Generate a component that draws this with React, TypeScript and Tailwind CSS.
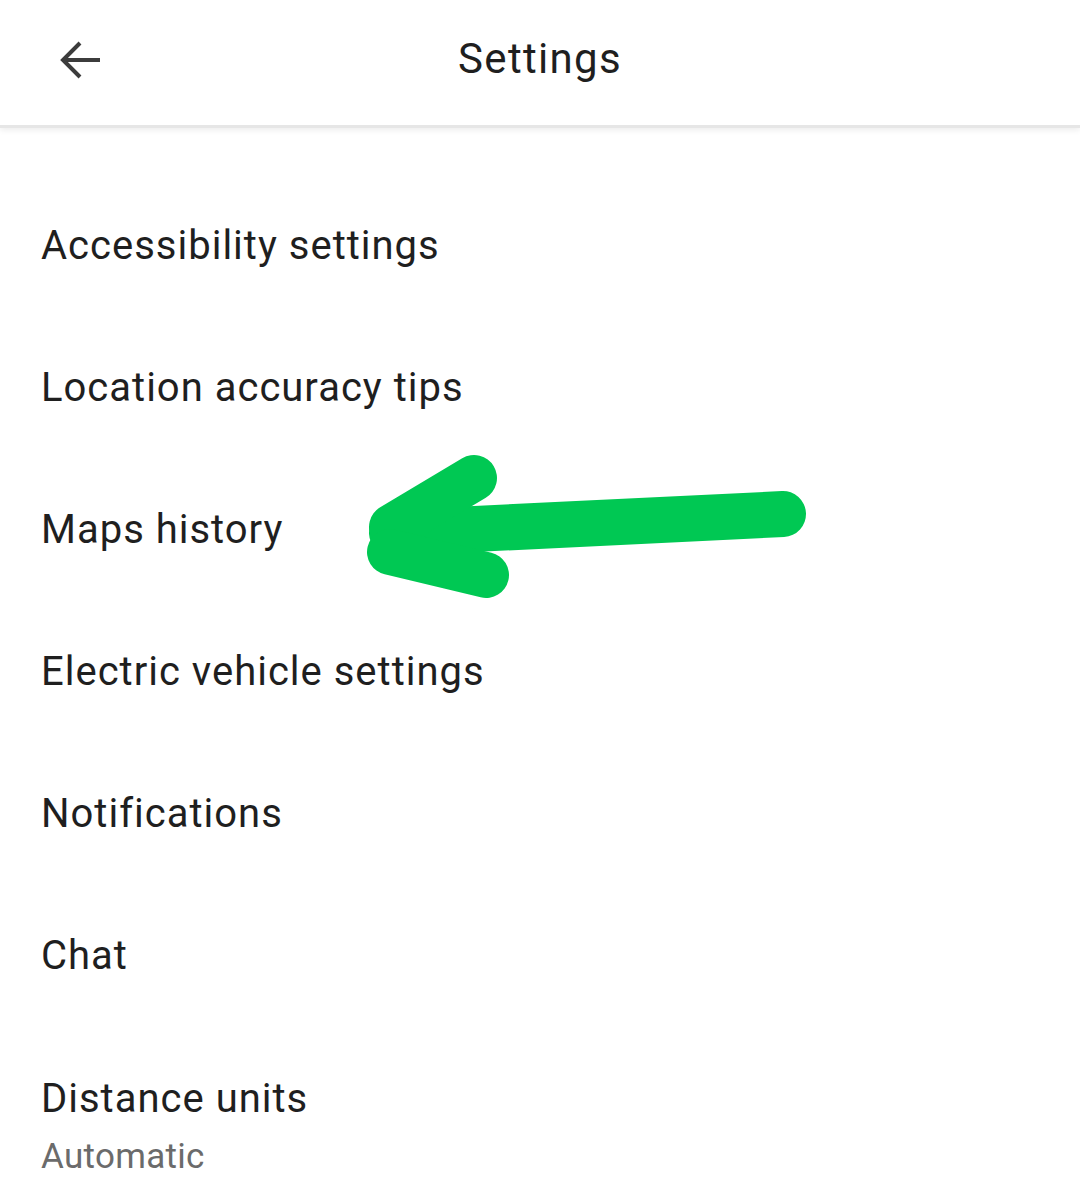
import React from "react";

const items = [
  "Accessibility settings",
  "Location accuracy tips",
  "Maps history",
  "Electric vehicle settings",
  "Notifications",
  "Chat",
];

export default function App() {
  return (
    <div className="relative w-[1080px] h-[1196px] overflow-hidden bg-white" style={{ fontFamily: "Roboto, 'Open Sans', sans-serif" }}>
      <header className="relative h-[128px] flex items-center justify-center border-b-[3px] border-[#e6e6e6] shadow-[0_2px_6px_rgba(0,0,0,0.08)]">
        <svg className="absolute left-[56px] top-[38px]" width="48" height="44" viewBox="0 0 48 44">
          <path d="M44 22 H8 M24 5 L7 22 L24 39" fill="none" stroke="#3c3c3c" strokeWidth="4" strokeLinecap="butt" strokeLinejoin="miter" />
        </svg>
        <h1 className="text-[42px] font-normal tracking-[1.3px] text-[#1f1f1f] leading-none mt-[-8px]">Settings</h1>
      </header>
      <div className="pt-[47px]">
        {items.map((t) => (
          <div key={t} className="h-[142px] flex items-center pl-[41px]">
            <span className="text-[40px] tracking-[1px] text-[#1f1f1f] leading-none">{t}</span>
          </div>
        ))}
        <div className="flex flex-col pl-[41px] pt-[52px]">
          <span className="text-[40px] tracking-[1px] text-[#1f1f1f] leading-none">Distance units</span>
          <span className="text-[35px] tracking-[0.3px] text-[#6b6b6b] leading-none mt-[20px]">Automatic</span>
        </div>
      </div>
      <svg className="absolute left-0 top-0 pointer-events-none" width="1080" height="1196" viewBox="0 0 1080 1196">
        <g stroke="#00c853" strokeWidth="46" strokeLinecap="round" strokeLinejoin="round" fill="none">
          <path d="M392 533 L783 514" />
          <path d="M392 527 L474 478" />
          <path d="M390 552 L486 575" />
        </g>
      </svg>
    </div>
  );
}
